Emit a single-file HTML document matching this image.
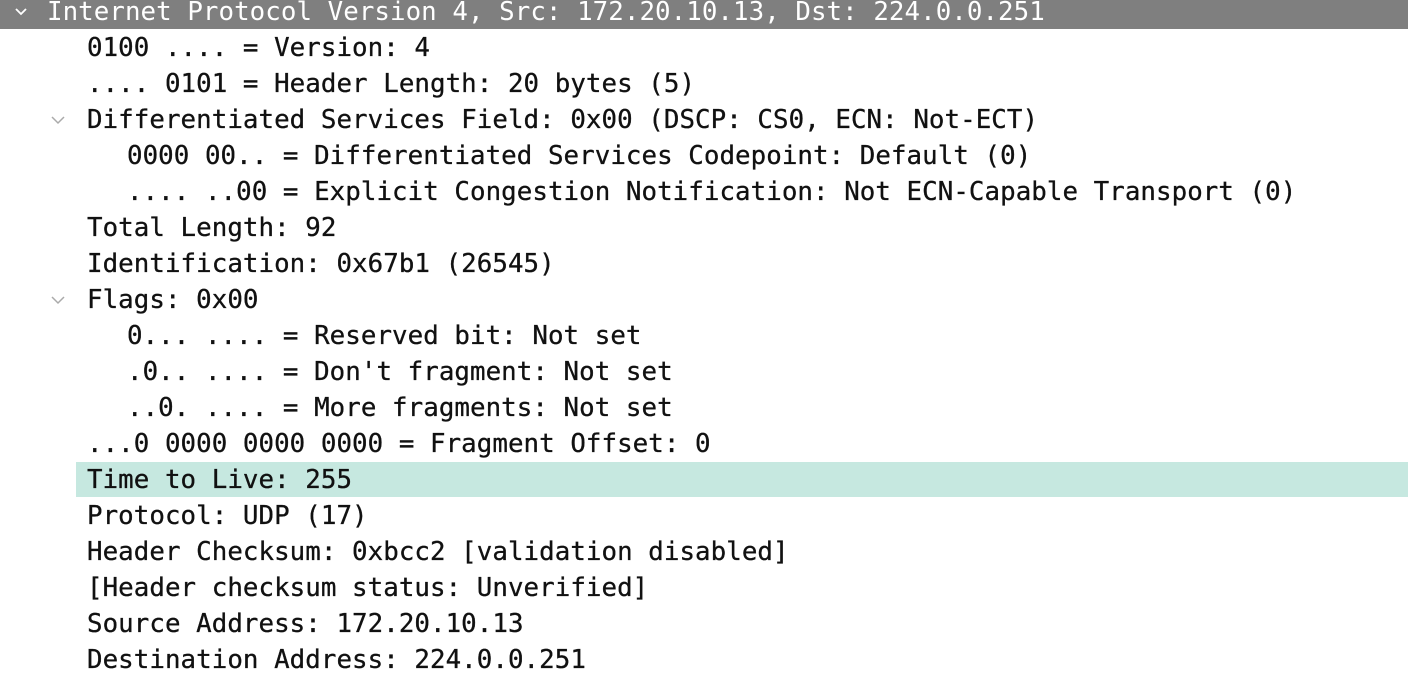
<!DOCTYPE html><html><head><style>
body{margin:0;width:1408px;height:676px;background:#fff;overflow:hidden;position:relative;font-family:"DejaVu Sans Mono","Liberation Mono",monospace;font-size:25.8px;letter-spacing:0.06px;color:#111}
.r{position:absolute;left:0;height:36px;line-height:36px;white-space:pre;-webkit-text-stroke:0.3px #111}
.hdr{position:absolute;left:0;top:0;width:1408px;height:29px;background:#7f7f7f}
.hl{position:absolute;left:76px;top:462px;width:1332px;height:35px;background:#c6e8e0}
svg{position:absolute}
</style></head><body>
<div class="hdr"></div>
<div class="hl"></div>
<svg style="left:14px;top:6px" width="14" height="12"><path d="M2 3 L7 8 L12 3" stroke="#fff" stroke-width="1.8" fill="none"/></svg>
<div class="r" style="left:47px;top:-5px;color:#fff;line-height:34px;-webkit-text-stroke:0">Internet Protocol Version 4, Src: 172.20.10.13, Dst: 224.0.0.251</div>
<svg style="left:50px;top:114px" width="16" height="12"><path d="M2 3 L8 9 L14 3" stroke="#aaa" stroke-width="1.5" fill="none"/></svg>
<svg style="left:50px;top:294px" width="16" height="12"><path d="M2 3 L8 9 L14 3" stroke="#aaa" stroke-width="1.5" fill="none"/></svg>
<div class="r" style="left:87px;top:30px">0100 .... = Version: 4</div>
<div class="r" style="left:87px;top:66px">.... 0101 = Header Length: 20 bytes (5)</div>
<div class="r" style="left:87px;top:102px">Differentiated Services Field: 0x00 (DSCP: CS0, ECN: Not-ECT)</div>
<div class="r" style="left:127px;top:138px">0000 00.. = Differentiated Services Codepoint: Default (0)</div>
<div class="r" style="left:127px;top:174px">.... ..00 = Explicit Congestion Notification: Not ECN-Capable Transport (0)</div>
<div class="r" style="left:87px;top:210px">Total Length: 92</div>
<div class="r" style="left:87px;top:246px">Identification: 0x67b1 (26545)</div>
<div class="r" style="left:87px;top:282px">Flags: 0x00</div>
<div class="r" style="left:127px;top:318px">0... .... = Reserved bit: Not set</div>
<div class="r" style="left:127px;top:354px">.0.. .... = Don't fragment: Not set</div>
<div class="r" style="left:127px;top:390px">..0. .... = More fragments: Not set</div>
<div class="r" style="left:87px;top:426px">...0 0000 0000 0000 = Fragment Offset: 0</div>
<div class="r" style="left:87px;top:462px">Time to Live: 255</div>
<div class="r" style="left:87px;top:498px">Protocol: UDP (17)</div>
<div class="r" style="left:87px;top:534px">Header Checksum: 0xbcc2 [validation disabled]</div>
<div class="r" style="left:87px;top:570px">[Header checksum status: Unverified]</div>
<div class="r" style="left:87px;top:606px">Source Address: 172.20.10.13</div>
<div class="r" style="left:87px;top:642px">Destination Address: 224.0.0.251</div>
</body></html>
